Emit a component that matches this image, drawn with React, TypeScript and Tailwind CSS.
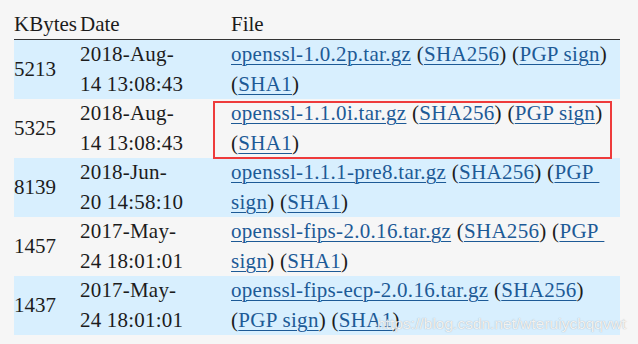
import React from "react";

const L = ({ children }: { children: React.ReactNode }) => (
  <a className="text-[#1d5a96] underline decoration-1 underline-offset-[3px]" href="#">
    {children}
  </a>
);

type Row = { kb: string; d1: string; d2: string; file: React.ReactNode; blue: boolean };

const rows: Row[] = [
  {
    kb: "5213",
    d1: "2018-Aug-",
    d2: "14 13:08:43",
    blue: true,
    file: (
      <>
        <L>openssl-1.0.2p.tar.gz</L> (<L>SHA256</L>) (<L>PGP sign</L>)
        <br />(<L>SHA1</L>)
      </>
    ),
  },
  {
    kb: "5325",
    d1: "2018-Aug-",
    d2: "14 13:08:43",
    blue: false,
    file: (
      <>
        <L>openssl-1.1.0i.tar.gz</L> (<L>SHA256</L>) (<L>PGP sign</L>)
        <br />(<L>SHA1</L>)
      </>
    ),
  },
  {
    kb: "8139",
    d1: "2018-Jun-",
    d2: "20 14:58:10",
    blue: true,
    file: (
      <>
        <L>openssl-1.1.1-pre8.tar.gz</L> (<L>SHA256</L>) (<L>PGP&nbsp;</L>
        <br />
        <L>sign</L>) (<L>SHA1</L>)
      </>
    ),
  },
  {
    kb: "1457",
    d1: "2017-May-",
    d2: "24 18:01:01",
    blue: false,
    file: (
      <>
        <L>openssl-fips-2.0.16.tar.gz</L> (<L>SHA256</L>) (<L>PGP&nbsp;</L>
        <br />
        <L>sign</L>) (<L>SHA1</L>)
      </>
    ),
  },
  {
    kb: "1437",
    d1: "2017-May-",
    d2: "24 18:01:01",
    blue: true,
    file: (
      <>
        <L>openssl-fips-ecp-2.0.16.tar.gz</L> (<L>SHA256</L>)
        <br />(<L>PGP sign</L>) (<L>SHA1</L>)
      </>
    ),
  },
];

export default function App() {
  return (
    <div
      className="relative w-[638px] h-[344px] overflow-hidden bg-[#f6f6f6] text-[#1c1c1c] whitespace-nowrap"
      style={{ fontFamily: '"Liberation Serif", "Times New Roman", serif' }}
    >
      <div className="pt-[10px] pl-[14px]">
        <div className="w-[606px] text-[21px] leading-[29px]">
          <div className="flex h-[30px] border-b border-[#333]">
            <div className="w-[66px]">KBytes</div>
            <div className="w-[151px]">Date</div>
            <div>File</div>
          </div>
          {rows.map((r, i) => (
            <div
              key={i}
              className={`flex h-[59px] leading-[29.5px] ${r.blue ? "bg-[#d8effe]" : ""}`}
            >
              <div className="w-[66px] flex items-center">{r.kb}</div>
              <div className="w-[151px] tracking-[0.2px]">
                {r.d1}
                <br />
                {r.d2}
              </div>
              <div className="tracking-[0.3px]">{r.file}</div>
            </div>
          ))}
        </div>
      </div>
      <div className="absolute left-[213px] top-[101px] w-[399px] h-[58px] border-2 border-[#ee3b3b]" />
      <div
        className="absolute left-[377px] top-[314px] text-[15.5px] leading-[20px] text-white/85"
        style={{
          fontFamily: '"Liberation Sans", Arial, sans-serif',
          textShadow: "0 0 1px rgba(120,120,120,0.7)",
        }}
      >
        https://blog.csdn.net/wteruiycbqqvwt
      </div>
    </div>
  );
}
